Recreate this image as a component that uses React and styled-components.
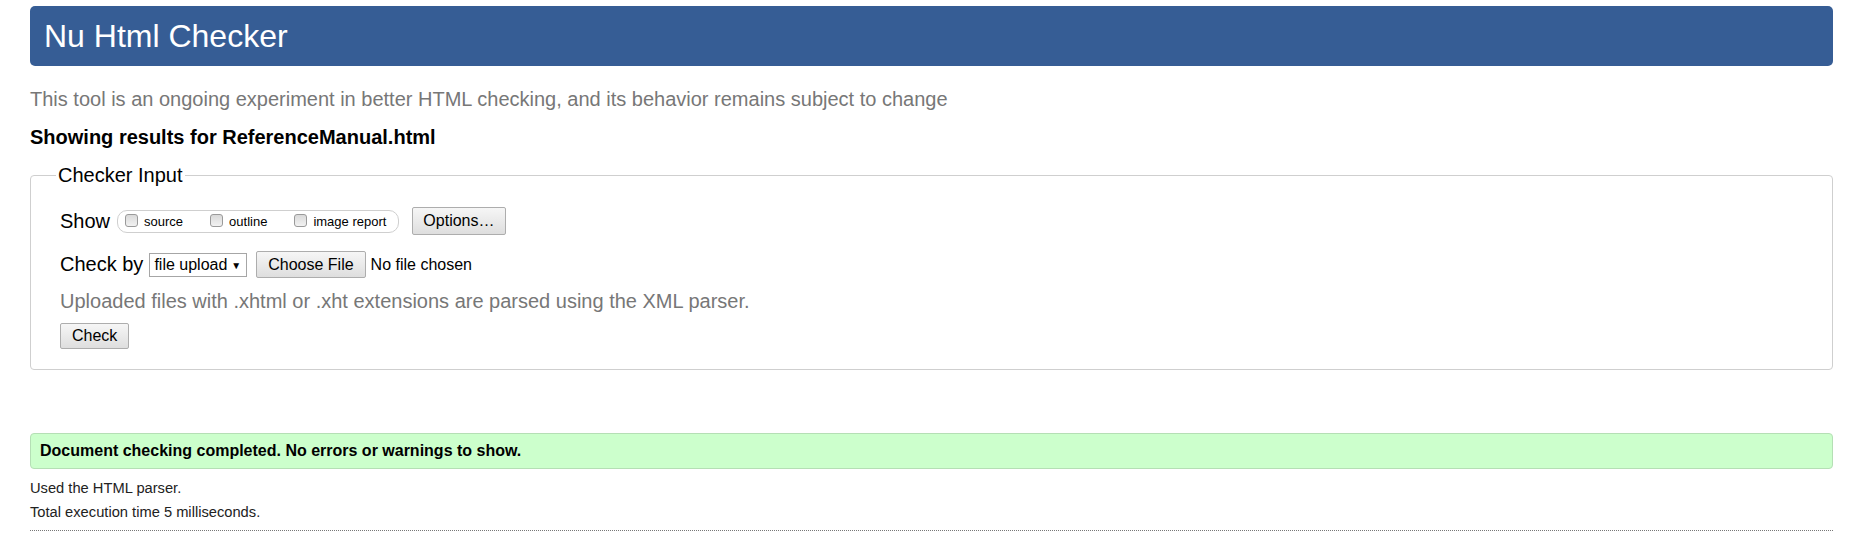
import React from "react";
import styled, { createGlobalStyle } from "styled-components";

const GlobalStyle = createGlobalStyle`
  html, body { margin: 0; padding: 0; background: #fff; }
  body { font-family: "Liberation Sans", Arial, sans-serif; color: #000; }
  * { box-sizing: border-box; }
`;

const Page = styled.div`
  padding: 6px 36px 40px 30px;
  font-family: "Liberation Sans", Arial, sans-serif;
`;

const Header = styled.h1`
  margin: 0;
  height: 60px;
  line-height: 60px;
  background: #365d95;
  border-radius: 5px;
  color: #fff;
  font-size: 32px;
  font-weight: normal;
  padding-left: 14px;
`;

const Lead = styled.p`
  margin: ${(p) => p.$top}px 0 0;
  font-size: 20px;
  line-height: 28px;
  color: ${(p) => (p.$muted ? "#777" : "#000")};
  font-weight: ${(p) => (p.$bold ? "bold" : "normal")};
`;

const Fieldset = styled.fieldset`
  margin: 10px 0 0;
  padding: 0 0 20px 29px;
  border: 1px solid #cfcfcf;
  border-radius: 4px;
  min-width: 0;
`;

const Legend = styled.legend`
  font-size: 20px;
  line-height: 28px;
  padding: 0 2px;
  margin-left: -4px;
  color: #000;
`;

const Row = styled.div`
  display: flex;
  align-items: center;
  height: ${(p) => p.$h}px;
  margin-top: ${(p) => p.$top}px;
  font-size: 20px;
`;

const Label = styled.span`
  font-size: 20px;
  margin-right: ${(p) => p.$gap}px;
`;

const Pill = styled.span`
  display: inline-flex;
  align-items: center;
  gap: 27px;
  height: 23px;
  padding: 0 12px 0 7px;
  border: 1px solid #cfcfcf;
  border-radius: 10px;
  margin-right: 13px;
`;

const Option = styled.label`
  display: inline-flex;
  align-items: center;
  gap: 6px;
  font-size: 13px;
  color: #000;
`;

const Box = styled.span`
  display: inline-block;
  width: 13px;
  height: 13px;
  border: 1px solid #9a9a9a;
  border-radius: 3px;
  background: linear-gradient(#d9d9d9, #f2f2f2);
  margin-top: -2px;
`;

const Button = styled.button`
  font-family: "Liberation Sans", Arial, sans-serif;
  font-size: 16px;
  color: #000;
  height: ${(p) => p.$h}px;
  padding: 0 ${(p) => p.$px}px;
  border: 1px solid #adadad;
  border-radius: 2px;
  background: linear-gradient(#f6f6f6, #dedede);
  margin-right: ${(p) => p.$mr || 0}px;
`;

const Select = styled.span`
  display: inline-flex;
  align-items: center;
  height: 24px;
  padding: 0 5px 0 4px;
  border: 1px solid #a6a6a6;
  background: #fff;
  font-size: 16px;
  margin-right: 9px;
`;

const Caret = styled.span`
  font-size: 10px;
  margin-left: 4px;
  margin-top: 1px;
`;

const FileName = styled.span`
  font-size: 16px;
`;

const Success = styled.div`
  margin-top: 63px;
  height: 36px;
  line-height: 34px;
  background: #ccffcc;
  border: 1px solid #b5dfb5;
  border-radius: 4px;
  padding-left: 9px;
  font-size: 16px;
  font-weight: bold;
`;

const Details = styled.div`
  margin-top: 7px;
  font-size: 14.7px;
  line-height: 24px;
  color: #222;
  padding-bottom: 6px;
  border-bottom: 1px dotted #777;
`;

export default function App() {
  return (
    <>
      <GlobalStyle />
      <Page>
        <Header>Nu Html Checker</Header>
        <Lead $top={19} $muted>
          This tool is an ongoing experiment in better HTML checking, and its behavior remains subject to change
        </Lead>
        <Lead $top={10} $bold>Showing results for ReferenceManual.html</Lead>
        <Fieldset>
          <Legend>Checker Input</Legend>
          <Row $h={28} $top={18}>
            <Label $gap={7}>Show</Label>
            <Pill>
              <Option><Box />source</Option>
              <Option><Box />outline</Option>
              <Option><Box />image report</Option>
            </Pill>
            <Button $h={28} $px={10}>Options…</Button>
          </Row>
          <Row $h={27} $top={16}>
            <Label $gap={6}>Check by</Label>
            <Select>
              file upload<Caret>▼</Caret>
            </Select>
            <Button $h={27} $px={11} $mr={5}>Choose File</Button>
            <FileName>No file chosen</FileName>
          </Row>
          <Lead $top={9} $muted>
            Uploaded files with .xhtml or .xht extensions are parsed using the XML parser.
          </Lead>
          <Row $h={26} $top={8}>
            <Button $h={26} $px={11}>Check</Button>
          </Row>
        </Fieldset>
        <Success>Document checking completed. No errors or warnings to show.</Success>
        <Details>
          <div>Used the HTML parser.</div>
          <div>Total execution time 5 milliseconds.</div>
        </Details>
      </Page>
    </>
  );
}
